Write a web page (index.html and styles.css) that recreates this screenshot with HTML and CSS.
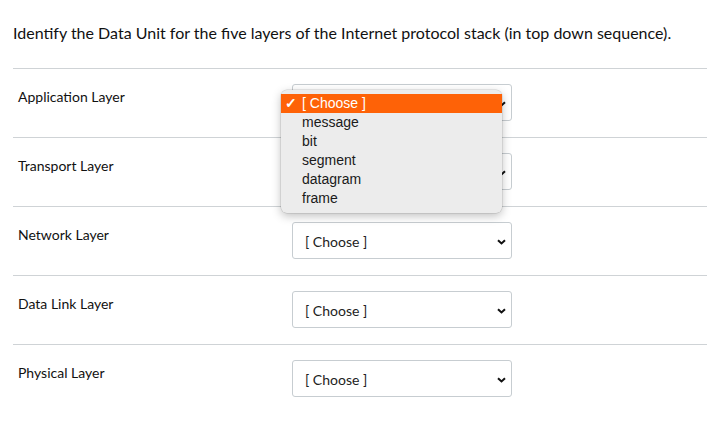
FILE: index.html
```html
<!DOCTYPE html>
<html lang="en">
<head>
  <meta charset="UTF-8" />
  <title>Quiz Question</title>
  <link rel="stylesheet" href="styles.css">
</head>
<body>
  <div class="quiz">
    <p class="question">Identify the Data Unit for the five layers of the Internet protocol stack (in top down sequence).</p>

    <div class="answers">
      <div class="row">
        <span class="label">Application Layer</span>
        <div class="picker">
          <div class="select">
            <span>[ Choose ]</span>
            <svg class="chevron" width="9" height="6" viewBox="0 0 9 6"><path d="M1 1.2 L4.5 4.5 L8 1.2" fill="none" stroke="#111" stroke-width="2"/></svg>
          </div>
          <!-- open dropdown -->
          <ul class="menu">
            <li class="active"><span class="tick">&#10003;</span>[ Choose ]</li>
            <li>message</li>
            <li>bit</li>
            <li>segment</li>
            <li>datagram</li>
            <li>frame</li>
          </ul>
        </div>
      </div>

      <div class="row">
        <span class="label">Transport Layer</span>
        <div class="picker">
          <div class="select">
            <span>[ Choose ]</span>
            <svg class="chevron" width="9" height="6" viewBox="0 0 9 6"><path d="M1 1.2 L4.5 4.5 L8 1.2" fill="none" stroke="#111" stroke-width="2"/></svg>
          </div>
        </div>
      </div>

      <div class="row">
        <span class="label">Network Layer</span>
        <div class="picker">
          <div class="select">
            <span>[ Choose ]</span>
            <svg class="chevron" width="9" height="6" viewBox="0 0 9 6"><path d="M1 1.2 L4.5 4.5 L8 1.2" fill="none" stroke="#111" stroke-width="2"/></svg>
          </div>
        </div>
      </div>

      <div class="row">
        <span class="label">Data Link Layer</span>
        <div class="picker">
          <div class="select">
            <span>[ Choose ]</span>
            <svg class="chevron" width="9" height="6" viewBox="0 0 9 6"><path d="M1 1.2 L4.5 4.5 L8 1.2" fill="none" stroke="#111" stroke-width="2"/></svg>
          </div>
        </div>
      </div>

      <div class="row">
        <span class="label">Physical Layer</span>
        <div class="picker">
          <div class="select">
            <span>[ Choose ]</span>
            <svg class="chevron" width="9" height="6" viewBox="0 0 9 6"><path d="M1 1.2 L4.5 4.5 L8 1.2" fill="none" stroke="#111" stroke-width="2"/></svg>
          </div>
        </div>
      </div>
    </div>
  </div>
</body>
</html>
```

FILE: styles.css
```css
body {
  margin: 0;
  background: #fff;
  font-family: Lato, "Open Sans", sans-serif;
  color: #2d3b45;
}

.quiz {
  padding: 0 9px 0 13px;
}

.question {
  margin: 0;
  padding: 22px 0 24px;
  font-size: 16px;
  line-height: 22px;
  color: #111;
}

.row {
  display: flex;
  align-items: flex-start;
  border-top: 1px solid #cfd3d6;
  padding: 15px 0 16px;
}

.label {
  width: 274px;
  padding: 3px 0 0 5px;
  font-size: 14px;
  line-height: 20px;
  color: #111;
}

.picker {
  position: relative;
}

.select {
  box-sizing: border-box;
  width: 220px;
  height: 37px;
  border: 1px solid #c7cdd1;
  border-radius: 3px;
  background: #fff;
  display: flex;
  align-items: center;
  justify-content: space-between;
  padding: 2px 5px 0 12px;
  font-size: 14px;
  color: #222;
}

.chevron {
  display: block;
}

/* native-looking popup */
.menu {
  position: absolute;
  left: -11px;
  top: 6px;
  width: 221px;
  margin: 0;
  padding: 4px 0 5px;
  list-style: none;
  background: #ececec;
  border-radius: 6px;
  box-shadow: 0 0 0 0.5px rgba(0, 0, 0, 0.15), 0 3px 10px rgba(0, 0, 0, 0.25);
  font-family: "Liberation Sans", Arial, sans-serif;
  font-size: 14px;
  z-index: 5;
}

.menu li {
  height: 19px;
  line-height: 19px;
  padding-left: 21px;
  color: #1a1a1a;
  position: relative;
}

.menu li.active {
  background: #fe6207;
  color: #fff;
}

.tick {
  position: absolute;
  left: 4px;
  top: 0;
  font-size: 14px;
  font-weight: bold;
}
```
